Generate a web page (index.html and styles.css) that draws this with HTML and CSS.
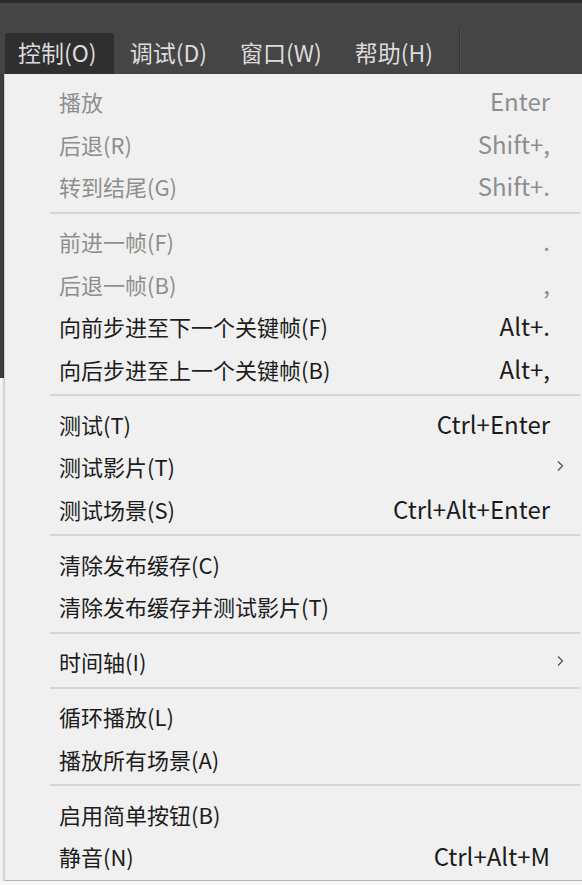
FILE: index.html
```html
<!DOCTYPE html>
<html lang="zh-CN">
<head>
    <meta charset="UTF-8">
    <meta name="viewport" content="width=device-width, initial-scale=1.0">
    <title>控制菜单</title>
    <link rel="stylesheet" href="styles.css">
</head>
<body>
    <div class="topline"></div>
    <div class="menubar">
        <div class="bar-item active">控制(O)</div>
        <div class="bar-item">调试(D)</div>
        <div class="bar-item">窗口(W)</div>
        <div class="bar-item">帮助(H)</div>
        <div class="bar-divider"></div>
    </div>

    <div class="stage">
        <div class="dropdown">
            <div class="row disabled"><span>播放</span><span class="key">Enter</span></div>
            <div class="row disabled"><span>后退(R)</span><span class="key">Shift+,</span></div>
            <div class="row disabled"><span>转到结尾(G)</span><span class="key">Shift+.</span></div>
            <div class="sep"></div>
            <div class="row disabled"><span>前进一帧(F)</span><span class="key">.</span></div>
            <div class="row disabled"><span>后退一帧(B)</span><span class="key">,</span></div>
            <div class="row"><span>向前步进至下一个关键帧(F)</span><span class="key">Alt+.</span></div>
            <div class="row"><span>向后步进至上一个关键帧(B)</span><span class="key">Alt+,</span></div>
            <div class="sep"></div>
            <div class="row"><span>测试(T)</span><span class="key">Ctrl+Enter</span></div>
            <div class="row">
                <span>测试影片(T)</span>
                <svg class="arrow" width="8" height="12" viewBox="0 0 8 12"><path d="M2 1.5 L6.5 6 L2 10.5" fill="none" stroke="#555" stroke-width="1.3"/></svg>
            </div>
            <div class="row"><span>测试场景(S)</span><span class="key">Ctrl+Alt+Enter</span></div>
            <div class="sep"></div>
            <div class="row"><span>清除发布缓存(C)</span></div>
            <div class="row"><span>清除发布缓存并测试影片(T)</span></div>
            <div class="sep"></div>
            <div class="row">
                <span>时间轴(I)</span>
                <svg class="arrow" width="8" height="12" viewBox="0 0 8 12"><path d="M2 1.5 L6.5 6 L2 10.5" fill="none" stroke="#555" stroke-width="1.3"/></svg>
            </div>
            <div class="sep"></div>
            <div class="row"><span>循环播放(L)</span></div>
            <div class="row"><span>播放所有场景(A)</span></div>
            <div class="sep"></div>
            <div class="row"><span>启用简单按钮(B)</span></div>
            <div class="row"><span>静音(N)</span><span class="key">Ctrl+Alt+M</span></div>
        </div>
    </div>
</body>
</html>
```

FILE: styles.css
```css
body {
    margin: 0;
    padding: 0;
    font-family: "Noto Sans CJK SC", "Noto Sans", sans-serif;
    background: #f7f7f7;
    overflow: hidden;
}
.topline {
    height: 3px;
    background: #2c2c2c;
}
.menubar {
    height: 71px;
    background: #454545;
    display: flex;
    align-items: flex-end;
    padding-left: 5px;
    box-sizing: border-box;
}
.bar-item {
    height: 41px;
    box-sizing: border-box;
    padding: 0 17px 3px 13px;
    margin-right: 3px;
    display: flex;
    align-items: center;
    font-size: 23px;
    line-height: 1;
    color: #dcdcdc;
    border-radius: 3px 3px 0 0;
}
.bar-item.active {
    background: #2f2f2f;
}
.bar-divider {
    width: 1px;
    height: 45px;
    margin-left: 6px;
    background: #323232;
    border-right: 1px solid #4e4e4e;
}
.stage {
    padding-left: 4px;
    background: linear-gradient(#3e3e3e 0, #3e3e3e 304px, #f7f7f7 304px);
}
.dropdown {
    background: #f0f0f0;
    border-left: 1px solid #cfcfcf;
    border-bottom: 1px solid #b5b5b5;
    box-shadow: 0 3px 3px rgba(0, 0, 0, 0.3);
    padding: 6px 0 2.5px;
}
.row {
    height: 42.5px;
    display: flex;
    align-items: center;
    justify-content: space-between;
    padding: 0 32px 0 54px;
    font-size: 22px;
    line-height: 1;
    color: #1c1c1c;
}
.row.disabled {
    color: #8e8e8e;
}
.key {
    font-size: 24px;
}
.arrow {
    margin-right: -14px;
}
.sep {
    height: 2px;
    margin: 4px 2px 6.5px 45px;
    background: #d6d6d6;
}
```
